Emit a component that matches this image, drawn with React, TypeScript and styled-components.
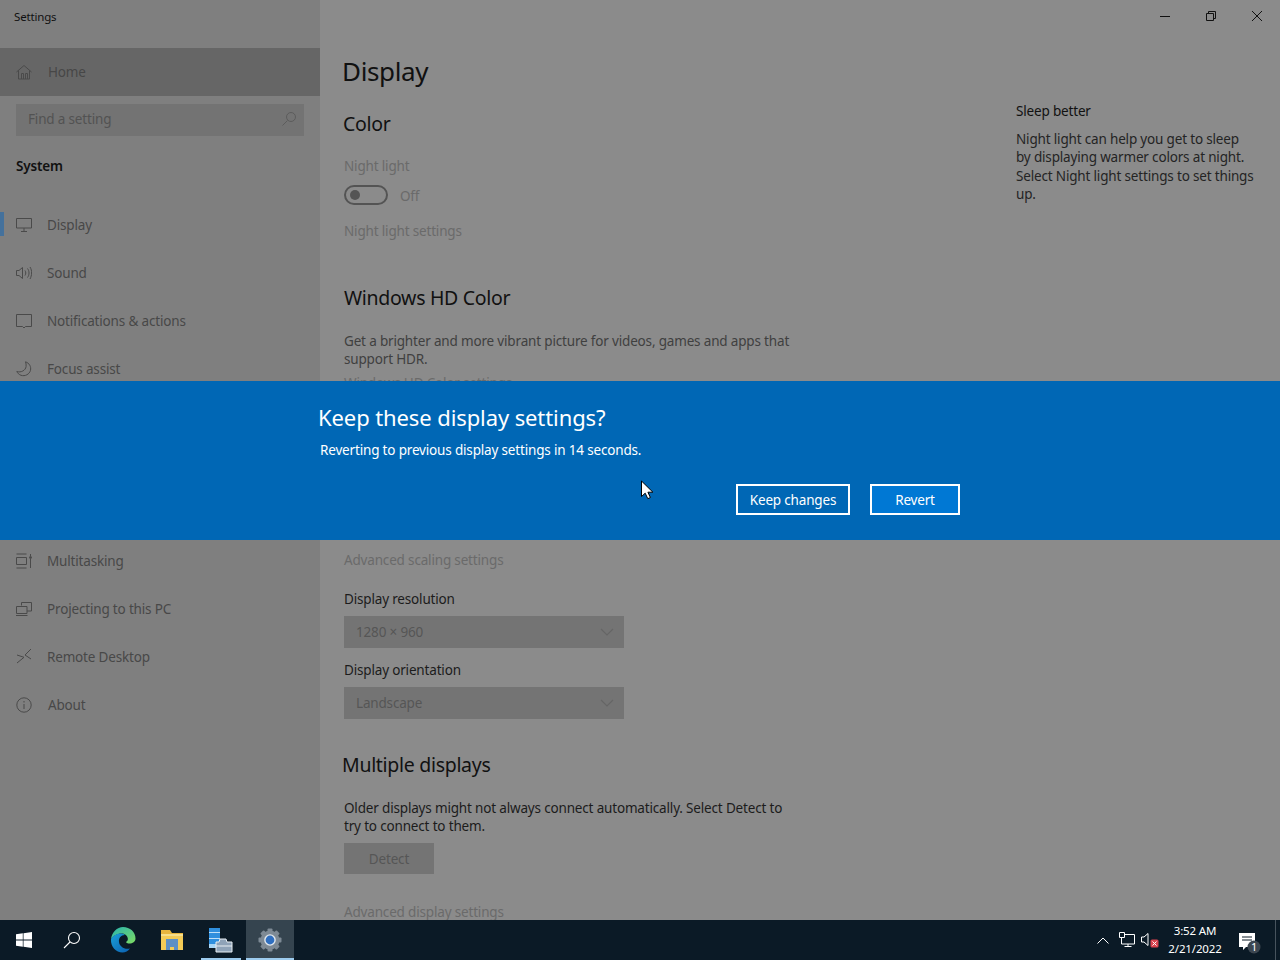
import React from "react";
import styled, { createGlobalStyle } from "styled-components";

const Global = createGlobalStyle`
  html, body { margin: 0; padding: 0; height: 100%; overflow: hidden; }
  #root { height: 100%; }
  * { box-sizing: border-box; }
  body { font-family: "Noto Sans", "Open Sans", "Liberation Sans", sans-serif; font-size: 13.5px; letter-spacing: -0.17px; }
`;

const Screen = styled.div`
  position: relative;
  width: 1280px;
  height: 960px;
  display: flex;
  flex-direction: column;
  overflow: hidden;
`;
const Win = styled.div`
  flex: 0 0 920px;
  display: flex;
  overflow: hidden;
  background: #8b8b8b;
`;
const Sidebar = styled.nav`
  flex: 0 0 320px;
  background: #7f7f7f;
  display: flex;
  flex-direction: column;
`;
const AppTitle = styled.div`
  height: 32px;
  padding: 0 0 0 14px;
  line-height: 34px;
  font-size: 11.5px;
  color: #111;
`;
const Label = styled.span`
  line-height: 20px;
`;
const HomeRow = styled.div`
  margin-top: 16px;
  height: 48px;
  background: #666;
  display: flex;
  align-items: center;
  padding-left: 16px;
  gap: 16px;
  color: #474747;
`;
const Search = styled.div`
  margin: 8px 16px 0;
  height: 32px;
  padding: 0 7px 2px 12px;
  background: #737373;
  display: flex;
  align-items: center;
  justify-content: space-between;
  color: #525252;
`;
const Group = styled.div`
  margin: 20px 0 25px 16px;
  height: 20px;
  line-height: 20px;
  font-weight: 600;
  color: #111;
`;
const NavRow = styled.div<{ $active?: boolean; $after?: number; $textGap?: number }>`
  position: relative;
  height: 48px;
  flex: 0 0 48px;
  margin-top: ${(p) => p.$after ?? 0}px;
  display: flex;
  align-items: center;
  padding-left: 16px;
  gap: ${(p) => p.$textGap ?? 15}px;
  color: #484848;
  ${(p) =>
    p.$active &&
    `&::before { content: ""; position: absolute; left: 0; top: 11px; width: 4px; height: 24px; background: #44719c; }`}
`;
const Main = styled.main`
  flex: 1;
  display: flex;
  flex-direction: column;
`;
const Controls = styled.div`
  flex: 0 0 32px;
  display: flex;
  justify-content: flex-end;
`;
const Ctl = styled.div`
  width: 46px;
  height: 32px;
  display: flex;
  align-items: center;
  justify-content: center;
`;
const Body = styled.div`
  flex: 1;
  display: flex;
`;
const Content = styled.div`
  flex: 0 0 696px;
  padding-left: 24px;
  display: flex;
  flex-direction: column;
  align-items: flex-start;
`;
const H1 = styled.h1`
  margin: 19px 0 0 -2px;
  font-size: 26px;
  line-height: 40px;
  font-weight: 400;
  color: #111;
  letter-spacing: -0.35px;
`;
const H2 = styled.h2<{ $top: number; $left?: number }>`
  margin: ${(p) => p.$top}px 0 0 ${(p) => p.$left ?? 0}px;
  font-size: 19.5px;
  line-height: 28px;
  font-weight: 400;
  color: #111;
  letter-spacing: -0.3px;
  white-space: nowrap;
`;
const Line = styled.div<{ $top: number; $dim?: boolean }>`
  margin-top: ${(p) => p.$top}px;
  height: 20px;
  line-height: 20px;
  color: ${(p) => (p.$dim ? "#6a6a6a" : "#1c1c1c")};
  white-space: nowrap;
`;
const Para = styled.p<{ $top: number; $dim?: boolean }>`
  margin: ${(p) => p.$top}px 0 0;
  width: 450px;
  line-height: 18px;
  color: ${(p) => (p.$dim ? "#404040" : "#1c1c1c")};
`;
const ToggleRow = styled.div`
  margin-top: 9px;
  height: 20px;
  display: flex;
  align-items: flex-start;
  gap: 12px;
  color: #6a6a6a;
`;
const OffLabel = styled.span`
  line-height: 22px;
`;
const Toggle = styled.div`
  width: 44px;
  height: 20px;
  border: 2px solid #545454;
  border-radius: 10px;
  padding: 3px 4px;
`;
const Knob = styled.div`
  width: 10px;
  height: 10px;
  border-radius: 50%;
  background: #545454;
`;
const Select = styled.div`
  margin-top: 7px;
  width: 280px;
  height: 32px;
  background: #747474;
  display: flex;
  align-items: center;
  justify-content: space-between;
  padding: 0 10px 0 12px;
  color: #565656;
`;
const DetectBtn = styled.div`
  margin-top: 8px;
  width: 90px;
  height: 31px;
  background: #747474;
  display: flex;
  align-items: center;
  justify-content: center;
  color: #565656;
`;
const Aside = styled.aside`
  width: 244px;
  padding-top: 69px;
  color: #111;
`;
const AsideTitle = styled.div`
  height: 20px;
  line-height: 20px;
`;
const AsideText = styled.p`
  margin: 9px 0 0;
  width: 239px;
  line-height: 18.4px;
  color: #242424;
`;
const Banner = styled.div`
  position: absolute;
  left: 0;
  right: 0;
  top: 381px;
  height: 159px;
  background: #0067b5;
  color: #fff;
  display: flex;
  justify-content: center;
`;
const BannerInner = styled.div`
  width: 640px;
  display: flex;
  flex-direction: column;
`;
const BannerTitle = styled.div`
  margin: 18px 0 0 -2px;
  font-size: 22px;
  line-height: 36px;
  letter-spacing: -0.1px;
`;
const BannerText = styled.div`
  margin-top: 5px;
  line-height: 20px;
`;
const BannerActions = styled.div`
  margin-top: 24px;
  display: flex;
  justify-content: flex-end;
  gap: 20px;
`;
const BannerBtn = styled.div<{ $w: number; $primary?: boolean }>`
  width: ${(p) => p.$w}px;
  height: 31px;
  border: 2px solid #fff;
  background: ${(p) => (p.$primary ? "#0078d4" : "#0067b5")};
  display: flex;
  align-items: center;
  justify-content: center;
`;
const Cursor = styled.svg`
  position: absolute;
  left: 640px;
  top: 480px;
`;
const Taskbar = styled.footer`
  flex: 0 0 40px;
  background: #0b1a26;
  display: flex;
  color: #fff;
`;
const TaskBtn = styled.div<{ $lead?: number; $active?: boolean; $open?: boolean }>`
  position: relative;
  width: 48px;
  height: 40px;
  margin-left: ${(p) => p.$lead ?? 0}px;
  background: ${(p) => (p.$active ? "#35444f" : "transparent")};
  display: flex;
  align-items: center;
  justify-content: center;
  ${(p) =>
    (p.$open || p.$active) &&
    `&::after { content: ""; position: absolute; bottom: 0; height: 2px; left: ${p.$active ? 0 : 4}px; right: ${
      p.$active ? 0 : 4
    }px; background: #9ccbee; }`}
`;
const Tray = styled.div`
  margin-left: auto;
  display: flex;
  align-items: center;
  height: 40px;
`;
const TrayItem = styled.div<{ $w: number }>`
  width: ${(p) => p.$w}px;
  height: 40px;
  display: flex;
  align-items: center;
  justify-content: center;
`;
const Clock = styled.div`
  width: 66px;
  text-align: center;
  font-size: 11.5px;
  line-height: 18px;
  letter-spacing: -0.15px;
`;
const Desk = styled.div`
  width: 5px;
  margin-left: 7px;
  height: 40px;
  border-left: 1px solid #47535d;
`;

const S = { fill: "none", stroke: "#4a4a4a", strokeWidth: 1 } as const;
const Ico = ({ children }: { children: React.ReactNode }) => (
  <svg width="16" height="16" viewBox="0 0 16 16" {...S}>
    {children}
  </svg>
);

const Icons = {
  home: (
    <Ico>
      <path d="M.5 8 8 1.500 15.500 8M2.500 6.500v8.500h11V6.500M5.500 15V9.500h2V15M9.500 15V9.500h2V15" />
    </Ico>
  ),
  display: (
    <Ico>
      <path d="M.5 1.500h15v9.500H.5zM8 11v3M5 14.500h6" />
    </Ico>
  ),
  sound: (
    <Ico>
      <path d="M.5 5.500h2.500L6.500 2.500v11L3 10.500H.5zM9 5.500c1 1.500 1 3.500 0 5M11.500 3.500c2 2.500 2 6.500 0 9M14 2c2.300 3.500 2 8.500 0 12" />
    </Ico>
  ),
  notif: (
    <Ico>
      <path d="M.5 1.500h15v12H9.500L8 15 6.500 13.500H.5z" />
    </Ico>
  ),
  moon: (
    <Ico>
      <path d="M9.500.8c4 1.400 5.800 5 5 8.500-1 4-5.500 6.300-9.500 5C3 13.600 1.500 12 .8 10.500c4 1.300 8.700-.8 9.300-5C10.300 3.800 10 2.200 9.500.8z" />
    </Ico>
  ),
  multi: (
    <Ico>
      <path d="M.5 1h10M.5 15h10M.5 4.500h10v7H.5zM14.500 1v2M14.500 6v9" />
      <circle cx="14.500" cy="4.500" r="1" fill="#4a4a4a" />
    </Ico>
  ),
  project: (
    <Ico>
      <path d="M5.500 4.500V1.500h10v8.500h-4.500M.5 5.500h10.500v7H.5zM0 14.500h11.500" />
    </Ico>
  ),
  remote: (
    <Ico>
      <path d="M1 6 8 8.300 1 14M15 0 9 6l6 4" />
    </Ico>
  ),
  about: (
    <Ico>
      <circle cx="8" cy="8" r="7.200" />
      <path d="M8 7v5M8 4v1.500" />
    </Ico>
  ),
};

const Chevron = () => (
  <svg width="14" height="8" viewBox="0 0 14 8" fill="none" stroke="#666" strokeWidth="1.200">
    <path d="M1 1l6 6 6-6" />
  </svg>
);

const Edge = () => (
  <svg width="26" height="26" viewBox="0 0 26 26">
    <defs>
      <linearGradient id="eb" x1="0" y1="0" x2="1" y2="1">
        <stop offset="0" stopColor="#1aa0d8" />
        <stop offset="1" stopColor="#0b5fb0" />
      </linearGradient>
      <linearGradient id="eg" x1="0" y1="0" x2="1" y2="1">
        <stop offset="0" stopColor="#26b3b0" />
        <stop offset="1" stopColor="#7fdc62" />
      </linearGradient>
    </defs>
    <path d="M1 12C2 5 7 0 13 0c7 0 12.500 5 12.500 11.500 0 3.500-3 5-6 5-2 0-3.500-.6-3.500-1.500 1.500-1 2-2 1.800-3.500C17.300 8 14.500 6.500 11.500 6.500 7 6.500 3 9 1 12z" fill="url(#eg)" />
    <path d="M1 12c2-3.500 6-5.500 10-5.500 3 0 4 1.500 3.800 1.500C11 8 8.500 11 9 15c.5 4.500 5.500 8 11 6.500-2 2.500-4.500 4-7.500 4C6 25.500 .5 20 1 12z" fill="url(#eb)" />
  </svg>
);

const Folder = () => (
  <svg width="24" height="22" viewBox="0 0 24 22">
    <path d="M1 1h9l2 3h11v17H1z" fill="#e8b53e" />
    <path d="M1 5h22v2H1z" fill="#f7de8b" />
    <path d="M1 7h22v14H1z" fill="#f4cb56" />
    <path d="M6 10h12v11h-4v-3h-4v3H6z" fill="#5d8fc4" />
  </svg>
);

const ServerMgr = () => (
  <svg width="26" height="26" viewBox="0 0 26 26">
    <path d="M1 1h11v20H1z" fill="#2f8fde" />
    <path d="M1 5h11v1H1zM1 11h11v1H1z" fill="#bfe0f8" />
    <path d="M1 17h11v4H1z" fill="#a9d6f5" />
    <path d="M8 15h3l1-3h6l1 3h5v10H8z" fill="#8fa3b8" stroke="#e8eef3" strokeWidth="1" />
    <path d="M8 19h16" stroke="#e8eef3" />
  </svg>
);

const Gear = () => (
  <svg width="26" height="26" viewBox="0 0 26 26">
    <g fill="#7e8a95">
      <circle cx="13" cy="13" r="9.500" />
      {[0, 45, 90, 135, 180, 225, 270, 315].map((a) => (
        <rect key={a} x="10.500" y="1.500" width="5" height="5" rx="1" transform={`rotate(${a} 13 13)`} />
      ))}
    </g>
    <circle cx="13" cy="13" r="5.800" fill="#dfe7ee" />
    <circle cx="13" cy="13" r="4.400" fill="#2f6fc0" />
  </svg>
);

export default function App() {
  return (
    <Screen>
      <Global />
      <Win>
        <Sidebar>
          <AppTitle>Settings</AppTitle>
          <HomeRow>
            {Icons.home}
            <Label>Home</Label>
          </HomeRow>
          <Search>
            <Label>Find a setting</Label>
            <svg width="16" height="16" viewBox="0 0 16 16" fill="none" stroke="#5c5c5c">
              <circle cx="10" cy="6" r="4.500" />
              <path d="M6.500 9.500 1.500 14.500" />
            </svg>
          </Search>
          <Group>System</Group>
          <NavRow $active>{Icons.display}<Label>Display</Label></NavRow>
          <NavRow>{Icons.sound}<Label>Sound</Label></NavRow>
          <NavRow>{Icons.notif}<Label>Notifications &amp; actions</Label></NavRow>
          <NavRow>{Icons.moon}<Label>Focus assist</Label></NavRow>
          <NavRow $after={144}>{Icons.multi}<Label>Multitasking</Label></NavRow>
          <NavRow>{Icons.project}<Label>Projecting to this PC</Label></NavRow>
          <NavRow>{Icons.remote}<Label>Remote Desktop</Label></NavRow>
          <NavRow $textGap={16}>{Icons.about}<Label>About</Label></NavRow>
        </Sidebar>
        <Main>
          <Controls>
            <Ctl>
              <svg width="10" height="10" viewBox="0 0 10 10" stroke="#111" fill="none"><path d="M0 5.500h10" /></svg>
            </Ctl>
            <Ctl>
              <svg width="10" height="10" viewBox="0 0 10 10" stroke="#111" fill="none"><path d="M.5 2.500h7v7h-7zM2.500 2.500v-2h7v7h-2" /></svg>
            </Ctl>
            <Ctl>
              <svg width="10" height="10" viewBox="0 0 10 10" stroke="#111" fill="none"><path d="M0 0l10 10M10 0 0 10" /></svg>
            </Ctl>
          </Controls>
          <Body>
            <Content>
              <H1>Display</H1>
              <H2 $top={19} $left={-1}>Color</H2>
              <Line $top={18} $dim>Night light</Line>
              <ToggleRow>
                <Toggle><Knob /></Toggle>
                <OffLabel>Off</OffLabel>
              </ToggleRow>
              <Line $top={16} $dim>Night light settings</Line>
              <H2 $top={43}>Windows HD Color</H2>
              <Para $top={20} $dim>Get a brighter and more vibrant picture for videos, games and apps that support HDR.</Para>
              <Line $top={5} $dim>Windows HD Color settings</Line>
              <Line $top={157} $dim>Advanced scaling settings</Line>
              <Line $top={19}>Display resolution</Line>
              <Select><Label>1280 × 960</Label><Chevron /></Select>
              <Line $top={12}>Display orientation</Line>
              <Select><Label>Landscape</Label><Chevron /></Select>
              <H2 $top={32} $left={-2}>Multiple displays</H2>
              <Para $top={20}>Older displays might not always connect automatically. Select Detect to try to connect to them.</Para>
              <DetectBtn>Detect</DetectBtn>
              <Line $top={28} $dim>Advanced display settings</Line>
            </Content>
            <Aside>
              <AsideTitle>Sleep better</AsideTitle>
              <AsideText>Night light can help you get to sleep by displaying warmer colors at night. Select Night light settings to set things up.</AsideText>
            </Aside>
          </Body>
        </Main>
      </Win>
      <Banner>
        <BannerInner>
          <BannerTitle>Keep these display settings?</BannerTitle>
          <BannerText>Reverting to previous display settings in 14 seconds.</BannerText>
          <BannerActions>
            <BannerBtn $w={114}><Label>Keep changes</Label></BannerBtn>
            <BannerBtn $w={90} $primary><Label>Revert</Label></BannerBtn>
          </BannerActions>
        </BannerInner>
      </Banner>
      <Cursor width="14" height="20" viewBox="0 0 14 20">
        <path d="M1.500 1v15.500l3.700-3.300 2.600 5.500 2.600-1.200-2.500-5.300h5z" fill="#fff" stroke="#000" />
      </Cursor>
      <Taskbar>
        <TaskBtn>
          <svg width="16" height="16" viewBox="0 0 16 16" fill="#fff">
            <path d="M0 2.300 6.800 1.300v6.300H0zM7.500 1.200 16 0v7.600H7.500zM0 8.400h6.800v6.300L0 13.700zM7.500 8.400H16V16l-8.500-1.200z" />
          </svg>
        </TaskBtn>
        <TaskBtn>
          <svg width="18" height="18" viewBox="0 0 18 18" fill="none" stroke="#fff" strokeWidth="1.100">
            <circle cx="11" cy="7" r="5.500" />
            <path d="M7 11 1 17" />
          </svg>
        </TaskBtn>
        <TaskBtn $lead={3}><Edge /></TaskBtn>
        <TaskBtn $lead={1}><Folder /></TaskBtn>
        <TaskBtn $lead={1} $open><ServerMgr /></TaskBtn>
        <TaskBtn $lead={1} $active><Gear /></TaskBtn>
        <Tray>
          <TrayItem $w={24}>
            <svg width="12" height="7" viewBox="0 0 12 7" fill="none" stroke="#fff"><path d="M.5 6.500 6 1l5.500 5.500" /></svg>
          </TrayItem>
          <TrayItem $w={23}>
            <svg width="16" height="16" viewBox="0 0 16 16" fill="none" stroke="#fff">
              <path d="M2.500 2.500h13v9.500h-13zM9 12v2.500M5.500 14.500h7" />
              <path d="M.5.500h5v5h-5z" fill="#0b1a26" />
            </svg>
          </TrayItem>
          <TrayItem $w={24}>
            <svg width="18" height="16" viewBox="0 0 18 16" fill="none" stroke="#fff">
              <path d="M.5 5h2.500l4-3.500v12L3 10H.5z" />
              <rect x="9.500" y="7.500" width="8" height="8" rx="1.500" fill="#d9434f" stroke="none" />
              <path d="M11.500 9.500l4 4M15.500 9.500l-4 4" stroke="#fff" />
            </svg>
          </TrayItem>
          <Clock>3:52 AM<br />2/21/2022</Clock>
          <TrayItem $w={40}>
            <svg width="28" height="28" viewBox="0 0 28 28">
              <path d="M5 7h16v14h-9l-3 3v-3H5z" fill="#fff" />
              <path d="M8 11h10M8 14h10" stroke="#0b1a26" />
              <circle cx="20" cy="21" r="6.500" fill="#3c4650" />
              <text x="20" y="25" textAnchor="middle" fontSize="11" fontFamily="Noto Sans, sans-serif" fill="#fff">1</text>
            </svg>
          </TrayItem>
          <Desk />
        </Tray>
      </Taskbar>
    </Screen>
  );
}
